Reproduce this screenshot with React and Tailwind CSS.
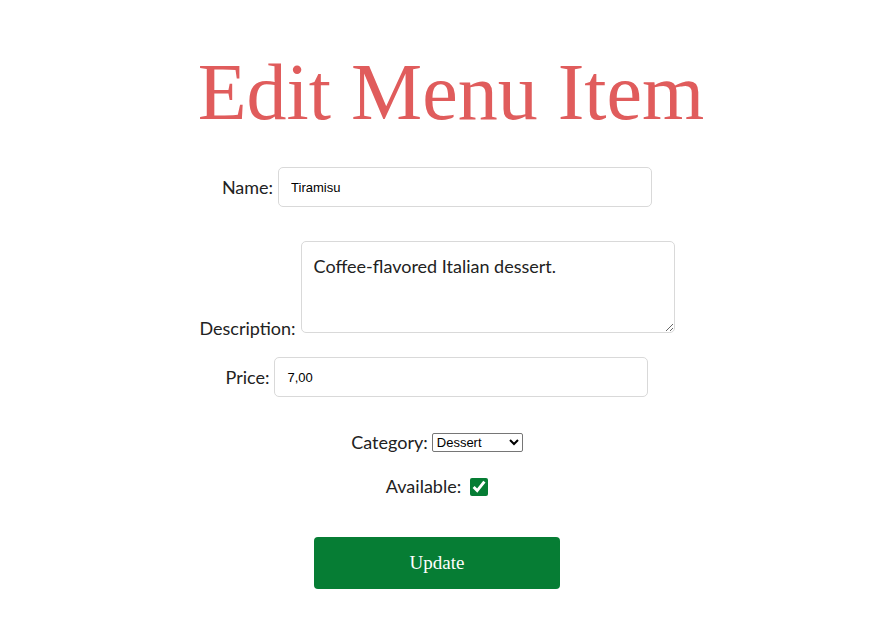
import React from "react";

export default function App() {
  const label = "text-[18px] text-[#222] [font-family:Lato,'Open_Sans',sans-serif]";
  return (
    <div className="min-h-[638px] w-full bg-white flex flex-col items-center pr-[4px]">
      <h1 className="mt-[52px] text-[80px] leading-[80px] font-light text-[#e05c5c] [font-family:'Liberation_Serif','DejaVu_Serif',serif] pl-[28px]">
        Edit Menu Item
      </h1>

      <div className="mt-[35px] flex items-center gap-[5px]">
        <span className={label}>Name:</span>
        <input
          defaultValue="Tiramisu"
          className="w-[374px] h-[40px] rounded-[5px] border border-[#d9d9d9] px-[12px] text-[13px] text-black outline-none [font-family:'Liberation_Sans',Arial,sans-serif]"
        />
      </div>

      <div className="mt-[34px] flex items-end gap-[5px]">
        <span className={label + " leading-[20px] -mb-[5px]"}>Description:</span>
        <textarea
          defaultValue="Coffee-flavored Italian dessert."
          className="w-[374px] h-[92px] rounded-[5px] border border-[#d9d9d9] px-[12px] py-[12px] text-[18px] leading-[24px] text-[#222] outline-none resize-y [font-family:Lato,'Open_Sans',sans-serif]"
        />
      </div>

      <div className="mt-[24px] flex items-center gap-[5px]">
        <span className={label}>Price:</span>
        <input
          defaultValue="7,00"
          className="w-[374px] h-[40px] rounded-[5px] border border-[#d9d9d9] px-[12px] text-[13px] text-black outline-none [font-family:'Liberation_Sans',Arial,sans-serif]"
        />
      </div>

      <div className="mt-[32px] flex items-center gap-[4px]">
        <span className={label}>Category:</span>
        <select
          defaultValue="Dessert"
          className="w-[91px] h-[19px] rounded-[2px] border border-[#767676] text-[13px] text-black bg-white [font-family:'Liberation_Sans',Arial,sans-serif]"
        >
          <option>Appetizer</option>
          <option>Main</option>
          <option>Dessert</option>
          <option>Drink</option>
        </select>
      </div>

      <div className="mt-[17px] flex items-center gap-[9px]">
        <span className={label}>Available:</span>
        <input
          type="checkbox"
          defaultChecked
          className="w-[18px] h-[18px] m-0 accent-[#067d34]"
        />
      </div>

      <button className="mt-[37px] w-[246px] h-[52px] rounded-[4px] bg-[#067d34] text-white text-[19px] font-normal [font-family:'Liberation_Serif','DejaVu_Serif',serif]">
        Update
      </button>
    </div>
  );
}
